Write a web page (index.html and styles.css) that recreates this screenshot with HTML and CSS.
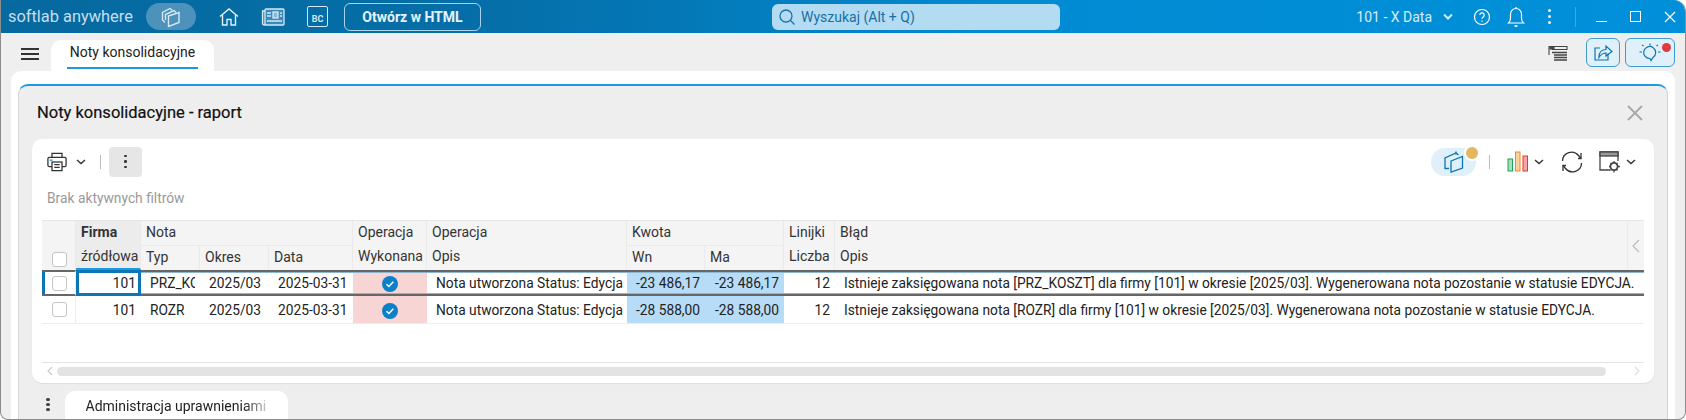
FILE: index.html
```html
<!DOCTYPE html>
<html lang="pl">
<head>
    <meta charset="UTF-8">
    <title>Noty konsolidacyjne</title>
    <link rel="stylesheet" href="styles.css">
</head>
<body>
    <div class="app">
        <!-- pasek tytulu -->
        <header class="titlebar">
            <div class="brand">softlab anywhere</div>
            <div class="pill">
                <svg width="24" height="24" viewBox="0 0 24 24" fill="none" stroke="#d5e8f3" stroke-width="1.4"><path d="M6 17.500 3.500 15V7.500L11 3.500l2.500 2"/><path d="M6.500 15V9.500L15 5.500l2 2"/><path d="M9.500 11l10.500-3.500v10L9.500 21.500z"/></svg>
            </div>
            <svg class="tb-home" width="22" height="22" viewBox="0 0 22 22" fill="none" stroke="#e3f1f8" stroke-width="1.4"><path d="M2 10.500 11 3l9 7.500"/><path d="M4.500 9v10h4.500v-5.500h4V19h4.500V9"/></svg>
            <svg class="tb-news" width="24" height="20" viewBox="0 0 24 20" fill="#d5e8f3" fill-opacity=".25" stroke="#d5e8f3" stroke-width="1.3"><rect x="4" y="2" width="19" height="16" rx="1"/><path d="M4 4H1.500v13l1.500 1h1"/><rect x="12" y="5" width="5" height="6" fill-opacity=".5"/><path d="M6 6h4M6 9h4M19 6h2M19 9h2M6 14h15"/></svg>
            <div class="tb-bc">BC</div>
            <button class="html-btn">Otwórz w HTML</button>
            <div class="search">
                <svg width="18" height="18" viewBox="0 0 18 18" fill="none" stroke="#1a74ab" stroke-width="1.3"><circle cx="8" cy="8" r="6"/><path d="m12.500 12.500 4 4"/></svg>
                <span>Wyszukaj (Alt + Q)</span>
            </div>
            <div class="tb-right">
                <span class="company">101 - X Data</span>
                <svg class="chev" width="12" height="8" viewBox="0 0 12 8" fill="none" stroke="#d8ecf7" stroke-width="2"><path d="m2 1.500 4 4 4-4"/></svg>
                <svg class="tb-help" width="18" height="18" viewBox="0 0 18 18" fill="none" stroke="#fff" stroke-width="1.200"><circle cx="9" cy="9" r="7.500"/><path d="M6.800 7a2.200 2.200 0 1 1 3.400 1.900c-.8.500-1.200 1-1.200 1.900"/><path d="M9 12.500v1.200"/></svg>
                <svg class="tb-bell" width="18" height="22" viewBox="0 0 18 22" fill="none" stroke="#fff" stroke-width="1.200"><path d="M1.500 17h15c-1.500-1-2-2.500-2-5V8a5.500 5.500 0 0 0-11 0v4c0 2.500-.5 4-2 5z"/><path d="M7.500 20h3" stroke-width="1.600"/><path d="M9 1v1.500"/></svg>
                <div class="tb-dots"><i></i><i></i><i></i></div>
                <div class="tb-sep"></div>
                <div class="win-min"></div>
                <div class="win-max"></div>
                <svg class="win-close" width="12" height="12" viewBox="0 0 12 12" stroke="#fff" stroke-width="1.200"><path d="m1 1 10 10M11 1 1 11"/></svg>
            </div>
        </header>

        <!-- zakladki -->
        <div class="tabstrip">
            <div class="burger"><span></span><span></span><span></span></div>
            <div class="tab"><span>Noty konsolidacyjne</span></div>
            <div class="tabstrip-right">
                <svg class="flag-list" width="20" height="18" viewBox="0 0 20 18" fill="none" stroke="#444" stroke-width="1.100"><path d="M1 1v9"/><path d="M1 1.500h18v3H4"/><path d="M4 7.500h15M6 10h13M6 12.500h13M6 15h13" stroke-width="1.300"/><rect x="2" y="2" width="4" height="2" fill="#444"/></svg>
                <button class="square-btn share">
                    <svg width="20" height="20" viewBox="0 0 20 20" fill="none" stroke="#0b76b3" stroke-width="1.200"><path d="M15 11.500V18H2V6h5"/><path d="M6 15c0-5 3-7.500 7-7.500V4l6 5.500-6 4.500v-3c-3 0-5 1-7 4.500z"/></svg>
                </button>
                <button class="square-btn bulb">
                    <svg width="24" height="20" viewBox="0 0 24 20" fill="none" stroke="#0b76b3" stroke-width="1.200"><path d="M12 16.500a6 6 0 1 1 3-1l-2 3z"/><path d="M12 1.500v2M4 10H1.500M5.500 4 4 3M18.500 4 20 3M20 10h2.500"/></svg>
                    <i class="red-dot"></i>
                </button>
            </div>
        </div>

        <div class="desk">
            <div class="window">
                <div class="window-head">
                    <h1>Noty konsolidacyjne - raport</h1>
                    <svg class="close-x" width="16" height="16" viewBox="0 0 16 16" stroke="#a8a8a8" stroke-width="1.800"><path d="m1 1 14 14M15 1 1 15"/></svg>
                </div>
                <div class="card">
                    <div class="toolbar">
                        <svg width="20" height="20" viewBox="0 0 22 22" fill="none" stroke="#333" stroke-width="1.400"><path d="M5.500 6V1.500h11V6"/><rect x="1" y="6" width="20" height="10" rx="1.500"/><rect x="5.500" y="11" width="11" height="9.500" fill="#fff"/><path d="M8 14h6M8 17h6"/><path d="M3 9h3" stroke="#1b8fd6"/></svg>
                        <svg class="tool-chev first" width="10" height="6" viewBox="0 0 10 6" fill="none" stroke="#333" stroke-width="1.400"><path d="m1 1 4 3.500L9 1"/></svg>
                        <div class="tool-sep"></div>
                        <div class="more-btn"><i></i><i></i><i></i></div>
                        <div class="toolbar-right">
                            <div class="views-pill">
                                <svg width="20" height="22" viewBox="0 0 20 22" fill="none" stroke="#0b76b3" stroke-width="1.300"><path d="M5 17.500H1V7l11-5 2.500 2"/><path d="M12 .5v3"/><path d="M7 10l11.500-4.500V17L7 21z"/></svg>
                                <i class="amber-dot"></i>
                            </div>
                            <div class="tool-sep"></div>
                            <svg class="bars" width="22" height="21" viewBox="0 0 22 21"><rect x="1" y="8" width="4.500" height="12" fill="#a9dcb9" stroke="#18a558"/><rect x="8.500" y="1" width="4.500" height="19" fill="#fbd29c" stroke="#f08a24"/><rect x="16" y="5" width="4.500" height="15" fill="#f6a5a5" stroke="#e5383b"/></svg>
                            <svg class="tool-chev" width="10" height="6" viewBox="0 0 10 6" fill="none" stroke="#333" stroke-width="1.400"><path d="m1 1 4 3.500L9 1"/></svg>
                            <svg class="refresh" width="22" height="22" viewBox="0 0 22 22" fill="none" stroke="#333" stroke-width="1.300"><path d="M1.500 10A9 9 0 0 1 17.500 4.500L20 7.500"/><path d="M20.500 12A9 9 0 0 1 4.500 17.500L2 14.500"/><path d="M20 2v5.500h-3M2 20v-5.500h3"/></svg>
                            <svg class="grid-set" width="22" height="22" viewBox="0 0 22 22" fill="none" stroke="#444" stroke-width="1.300"><path d="M11 19H1V1h18v9"/><rect x="1" y="1" width="18" height="4" fill="#999"/><circle cx="15" cy="15.500" r="3.600" fill="#fff" stroke-width="1.800"/><path d="M15 10v2M15 19v2.500M10 15.500h2M18 15.500h3M11.500 12l1.500 1.500M18.500 12 17 13.500M11.500 19.500 13 18M18.500 19.500 17 18"/></svg>
                            <svg class="tool-chev" width="10" height="6" viewBox="0 0 10 6" fill="none" stroke="#333" stroke-width="1.400"><path d="m1 1 4 3.500L9 1"/></svg>
                        </div>
                    </div>
                    <div class="filters">Brak aktywnych filtrów</div>

                    <div class="grid-wrap">
                        <table class="grid">
                            <colgroup>
                                <col class="c-check"><col class="c-firma"><col class="c-typ"><col class="c-okres"><col class="c-data">
                                <col class="c-oper"><col class="c-opis"><col class="c-wn"><col class="c-ma"><col class="c-licz"><col>
                            </colgroup>
                            <thead>
                                <tr class="head-top">
                                    <th rowspan="2" class="th-check"><span class="check"></span></th>
                                    <th class="th-firma">Firma</th>
                                    <th colspan="3">Nota</th>
                                    <th>Operacja</th>
                                    <th>Operacja</th>
                                    <th colspan="2">Kwota</th>
                                    <th>Linijki</th>
                                    <th class="th-last">Błąd</th>
                                </tr>
                                <tr class="head-sub">
                                    <th class="th-sorted">źródłowa</th>
                                    <th class="sub">Typ</th>
                                    <th class="sub">Okres</th>
                                    <th class="sub">Data</th>
                                    <th>Wykonana</th>
                                    <th>Opis</th>
                                    <th class="sub">Wn</th>
                                    <th class="sub">Ma</th>
                                    <th>Liczba</th>
                                    <th class="th-last">Opis</th>
                                </tr>
                            </thead>
                            <tbody>
                                <tr class="row selected">
                                    <td class="td-check"><span class="check"></span></td>
                                    <td class="num focused">101</td>
                                    <td><div class="clip">PRZ_KOSZT</div></td>
                                    <td>2025/03</td>
                                    <td>2025-03-31</td>
                                    <td class="done"><svg width="16" height="16" viewBox="0 0 16 16"><circle cx="8" cy="8" r="8" fill="#0b80c9"/><path d="m4.500 8.200 2.400 2.300 4.400-4.700" fill="none" stroke="#fff" stroke-width="1.500"/></svg></td>
                                    <td>Nota utworzona Status: Edycja</td>
                                    <td class="num amount">-23 486,17</td>
                                    <td class="num amount">-23 486,17</td>
                                    <td class="num">12</td>
                                    <td>Istnieje zaksięgowana nota [PRZ_KOSZT] dla firmy [101] w okresie [2025/03]. Wygenerowana nota pozostanie w statusie EDYCJA.</td>
                                </tr>
                                <tr class="row">
                                    <td class="td-check"><span class="check"></span></td>
                                    <td class="num">101</td>
                                    <td><div class="clip">ROZR</div></td>
                                    <td>2025/03</td>
                                    <td>2025-03-31</td>
                                    <td class="done"><svg width="16" height="16" viewBox="0 0 16 16"><circle cx="8" cy="8" r="8" fill="#0b80c9"/><path d="m4.500 8.200 2.400 2.300 4.400-4.700" fill="none" stroke="#fff" stroke-width="1.500"/></svg></td>
                                    <td>Nota utworzona Status: Edycja</td>
                                    <td class="num amount">-28 588,00</td>
                                    <td class="num amount">-28 588,00</td>
                                    <td class="num">12</td>
                                    <td>Istnieje zaksięgowana nota [ROZR] dla firmy [101] w okresie [2025/03]. Wygenerowana nota pozostanie w statusie EDYCJA.</td>
                                </tr>
                            </tbody>
                        </table>
                        <div class="collapse-col">
                            <svg width="8" height="14" viewBox="0 0 8 14" fill="none" stroke="#bbb" stroke-width="1.200"><path d="M7 1 1 7l6 6"/></svg>
                        </div>
                    </div>

                    <div class="hscroll">
                        <svg width="6" height="10" viewBox="0 0 6 10" fill="none" stroke="#ccc" stroke-width="1.200"><path d="M5 1 1 5l4 4"/></svg>
                        <div class="hscroll-track"></div>
                        <svg width="6" height="10" viewBox="0 0 6 10" fill="none" stroke="#ddd" stroke-width="1.200"><path d="m1 1 4 4-4 4"/></svg>
                    </div>
                </div>
                <div class="bottom-tabs">
                    <div class="tb-dots dark"><i></i><i></i><i></i></div>
                    <div class="bottom-tab"><span>Administracja uprawnieniami</span></div>
                </div>
            </div>
        </div>
    </div>
</body>
</html>
```

FILE: styles.css
```css
* {
    margin: 0;
    padding: 0;
    box-sizing: border-box;
}

html, body {
    height: 420px;
    overflow: hidden;
}

body {
    font-family: Roboto, "Noto Sans", sans-serif;
    font-size: 14px;
    color: #222;
    background-color: #fff;
}

.app {
    height: 420px;
    display: flex;
    flex-direction: column;
    border: 1px solid #8c8c8c;
    border-top: none;
    border-radius: 0 12px 8px 8px;
    overflow: hidden;
    background-color: #efefef;
}

/* pasek tytulu */
.titlebar {
    height: 33px;
    flex: none;
    display: flex;
    align-items: center;
    padding-left: 7px;
    background: linear-gradient(90deg, #06699f 0%, #056fa9 30%, #028bd3 60%, #0090d9 100%);
    color: #fff;
}

.brand {
    width: 138px;
    font-size: 16.400px;
    color: #c4dfee;
}

.pill {
    width: 50px;
    height: 27px;
    border-radius: 14px;
    background-color: #4d92ba;
    display: flex;
    align-items: center;
    justify-content: center;
}

.tb-home { margin-left: 22px; }
.tb-news { margin-left: 21px; }

.tb-bc {
    width: 21px;
    height: 21px;
    margin-left: 22px;
    border: 1.500px solid #d5e8f3;
    border-radius: 2px;
    font-size: 9px;
    font-weight: 700;
    color: #d5e8f3;
    display: flex;
    align-items: center;
    justify-content: center;
    padding-top: 4px;
}

.html-btn {
    width: 137px;
    height: 28px;
    margin-left: 16px;
    border: 1px solid #a9d3ea;
    border-radius: 6px;
    background: none;
    color: #e6f3fa;
    font-family: inherit;
    font-size: 14px;
    font-weight: 700;
}

.search {
    width: 288px;
    height: 26px;
    margin-left: 291px;
    background-color: #b3dcf3;
    border-radius: 6px;
    display: flex;
    align-items: center;
    gap: 5px;
    padding-left: 6px;
    font-size: 14px;
    color: #1a6fa5;
}

.tb-right {
    margin-left: auto;
    display: flex;
    align-items: center;
    height: 100%;
    padding-right: 9px;
}

.company {
    font-size: 14px;
    color: #d8ecf7;
}

.chev { margin-left: 10px; }
.tb-help { margin-left: 19px; }
.tb-bell { margin-left: 16px; }

.tb-dots {
    display: flex;
    flex-direction: column;
    gap: 3px;
    margin-left: 23px;
}

.tb-dots i {
    width: 3px;
    height: 3px;
    background-color: #e3f1f8;
    border-radius: 50%;
}

.tb-dots.dark {
    margin: 0 0 8px;
    gap: 1.500px;
}

.tb-dots.dark i {
    width: 3.500px;
    height: 3.500px;
    background-color: #444;
}

.tb-sep {
    width: 1px;
    height: 20px;
    margin-left: 24px;
    background-color: #3aa9e0;
}

.win-min {
    width: 11px;
    height: 1px;
    margin: 10px 0 0 20px;
    background-color: #fff;
}

.win-max {
    width: 11px;
    height: 11px;
    margin-left: 23px;
    border: 1px solid #fff;
}

.win-close { margin-left: 23px; }

/* zakladki */
.tabstrip {
    height: 38px;
    flex: none;
    display: flex;
    align-items: flex-end;
    padding-left: 20px;
}

.burger {
    width: 18px;
    display: flex;
    flex-direction: column;
    gap: 3px;
    margin-bottom: 11px;
}

.burger span {
    height: 2px;
    background-color: #333;
}

.tab {
    width: 163px;
    height: 31px;
    margin-left: 12px;
    background-color: #fff;
    border-radius: 10px 10px 0 0;
    padding: 0 16px;
}

.tab span {
    display: block;
    height: 29px;
    line-height: 25px;
    border-bottom: 2px solid #1b9ae0;
    font-size: 14px;
    text-align: center;
}

.tabstrip-right {
    margin-left: auto;
    align-self: center;
    display: flex;
    align-items: center;
    padding-right: 10px;
}

.flag-list { margin-top: 4px; }

.square-btn {
    height: 29px;
    border: 1px solid #3f9bcb;
    border-radius: 6px;
    background-color: #e0f0f9;
    display: flex;
    align-items: center;
    justify-content: center;
    position: relative;
}

.share { width: 34px; margin-left: 18px; }
.bulb { width: 50px; margin-left: 5px; }

.red-dot {
    position: absolute;
    top: 4px;
    right: 3px;
    width: 9px;
    height: 9px;
    border-radius: 50%;
    background-color: #e03a3e;
}

/* okno raportu */
.desk {
    flex: 1;
    min-height: 0;
    margin: 0 10px;
    padding: 13px 7px 0;
    background-color: #fff;
    border-radius: 10px 10px 0 0;
}

.window {
    height: 100%;
    background-color: #eee;
    border-top: 2px solid #1b9ae0;
    border-right: 1px solid #d4d4d4;
    border-left: 1px solid #d4d4d4;
    border-radius: 10px 10px 0 0;
    padding: 0 13px;
    display: flex;
    flex-direction: column;
}

.window-head {
    height: 53px;
    flex: none;
    display: flex;
    align-items: center;
    justify-content: space-between;
    padding: 0 11px 0 5px;
}

.window-head h1 {
    font-size: 16.500px;
    font-weight: 400;
    color: #111;
    -webkit-text-stroke: .2px #111;
}

.card {
    height: 244px;
    flex: none;
    background-color: #fff;
    border-radius: 10px;
    padding: 0 10px;
    box-shadow: 0 1px 1px #ddd;
}

.toolbar {
    height: 45px;
    display: flex;
    align-items: center;
    padding: 0 8px 0 5px;
}

.tool-chev { margin-left: 5px; }
.tool-chev.first { margin-left: 9px; }

.tool-sep {
    width: 1px;
    height: 14px;
    background-color: #bbb;
    margin: 0 8px 0 14px;
}

.more-btn {
    width: 33px;
    height: 30px;
    border-radius: 4px;
    background-color: #e6e6e6;
    display: flex;
    flex-direction: column;
    align-items: center;
    justify-content: center;
    gap: 3px;
}

.more-btn i {
    width: 2.500px;
    height: 2.500px;
    background-color: #333;
    border-radius: 50%;
}

.toolbar-right {
    margin-left: auto;
    display: flex;
    align-items: center;
}

.views-pill {
    width: 45px;
    height: 28px;
    border-radius: 14px;
    background-color: #dff0fa;
    display: flex;
    align-items: center;
    justify-content: center;
    position: relative;
}

.amber-dot {
    position: absolute;
    top: -1px;
    right: -2px;
    width: 12px;
    height: 12px;
    border-radius: 50%;
    background-color: #e3b65f;
    box-shadow: 0 0 0 2px #fff;
}

.toolbar-right .tool-sep { margin: 0 17px 0 13px; }
.refresh { margin-left: 17px; }
.grid-set { margin-left: 16px; }

.filters {
    height: 36px;
    padding-left: 5px;
    font-size: 13.800px;
    line-height: 28px;
    color: #999;
}

/* tabela */
.grid-wrap {
    position: relative;
    height: 143px;
    border-bottom: 1px solid #e4e4e4;
}

.grid {
    width: 1602px;
    table-layout: fixed;
    border-collapse: separate;
    border-spacing: 0;
    font-size: 13.750px;
}

.c-check { width: 34px; }
.c-firma { width: 65px; }
.c-typ { width: 59px; }
.c-okres { width: 69px; }
.c-data { width: 84px; }
.c-oper { width: 74px; }
.c-opis { width: 200px; }
.c-wn { width: 78px; }
.c-ma { width: 79px; }
.c-licz { width: 51px; }

.grid th {
    background-color: #f4f4f4;
    font-size: 14px;
    font-weight: 400;
    text-align: left;
    padding: 0 0 0 5px;
    color: #333;
    border-right: 1px solid #eaeaea;
    white-space: nowrap;
    overflow: hidden;
}

.head-top th {
    height: 25px;
    padding-bottom: 3px;
    border-top: 1px solid #e6e6e6;
}

.head-sub th {
    height: 25px;
    padding-bottom: 3px;
}

.grid .th-check {
    vertical-align: bottom;
    padding: 0 0 3px 10px;
    border-top: 1px solid #e6e6e6;
}

.grid .th-firma {
    background-color: #ececec;
    font-weight: 700;
}

.grid .th-sorted {
    background-color: #ececec;
    border-bottom: 2px solid #1b9ae0;
    padding-bottom: 1px;
}

.grid .sub {
    border-top: 1px solid #eaeaea;
}

.grid .th-last { border-right: none; }

.check {
    display: block;
    width: 15px;
    height: 15px;
    border: 1px solid #c4c4c4;
    border-radius: 3px;
    background-color: #fff;
}

.row td {
    height: 28px;
    padding: 0 5px 0 9px;
    white-space: nowrap;
    overflow: hidden;
    border-bottom: 1px solid #eee;
    color: #222;
}

.row .td-check {
    padding: 0 0 0 10px;
    border-right: 1px solid #eee;
}

.row .num {
    text-align: right;
    padding: 0 5px 0 0;
}

.row .clip {
    width: 45px;
    overflow: hidden;
}

.row .done {
    background-color: #f6d5d4;
    text-align: center;
    padding: 2px 0 0;
}

.row .done svg {
    display: block;
    margin: 0 auto;
}

.row .amount {
    background-color: #b7dcf8;
}

.selected td {
    height: 26px;
    border-top: 2px solid #666;
    border-bottom: 2px solid #666;
    box-shadow: inset 0 1px 0 #8fb8d0, inset 0 -1px 0 #8fb8d0;
}

.selected .td-check {
    box-shadow: inset 3px 0 0 #0b76b3;
}

.row.selected .focused {
    border: 3px solid #0b76b3;
    box-shadow: none;
    padding-right: 2px;
}

.collapse-col {
    position: absolute;
    top: 1px;
    right: 0;
    width: 17px;
    height: 49px;
    background-color: #f4f4f4;
    border-left: 1px solid #eaeaea;
    display: flex;
    align-items: center;
    justify-content: center;
}

.hscroll {
    height: 19px;
    display: flex;
    align-items: center;
    gap: 4px;
    padding: 0 4px 3px 5px;
}

.hscroll-track {
    flex: 1;
    height: 9px;
    margin-right: 24px;
    border-radius: 5px;
    background-color: #e3e3e3;
}

/* dolne zakladki */
.bottom-tabs {
    flex: 1;
    display: flex;
    align-items: flex-end;
    padding-left: 14px;
}

.bottom-tab {
    width: 223px;
    height: 28px;
    margin-left: 15px;
    background-color: #fff;
    border-radius: 10px 10px 0 0;
    padding-left: 21px;
    line-height: 30px;
    font-size: 14px;
    overflow: hidden;
    white-space: nowrap;
}

.bottom-tab span {
    display: block;
    width: 180px;
    overflow: hidden;
    -webkit-mask-image: linear-gradient(90deg, #000 88%, rgba(0, 0, 0, .25) 100%);
    mask-image: linear-gradient(90deg, #000 88%, rgba(0, 0, 0, .25) 100%);
}
```
